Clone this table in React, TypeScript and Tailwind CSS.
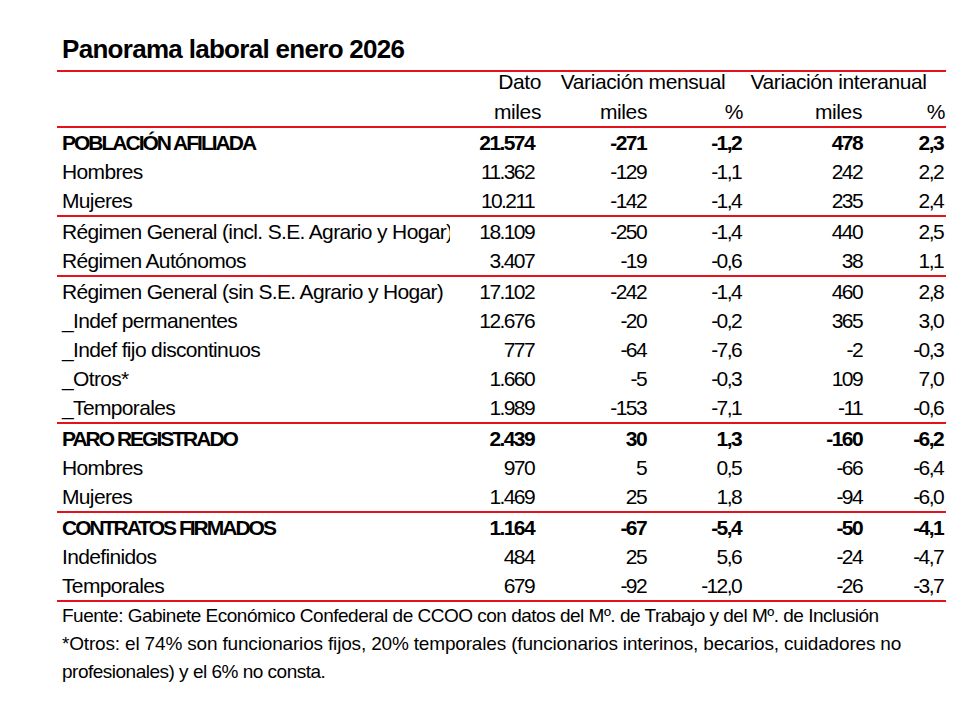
import React from 'react';

type Row = { label: string; bold?: boolean; v: string[] } | 'line';

const rows: Row[] = [
  { label: 'POBLACIÓN AFILIADA', bold: true, v: ['21.574', '-271', '-1,2', '478', '2,3'] },
  { label: 'Hombres', v: ['11.362', '-129', '-1,1', '242', '2,2'] },
  { label: 'Mujeres', v: ['10.211', '-142', '-1,4', '235', '2,4'] },
  'line',
  { label: 'Régimen General (incl. S.E. Agrario y Hogar)', v: ['18.109', '-250', '-1,4', '440', '2,5'] },
  { label: 'Régimen Autónomos', v: ['3.407', '-19', '-0,6', '38', '1,1'] },
  'line',
  { label: 'Régimen General (sin S.E. Agrario y Hogar)', v: ['17.102', '-242', '-1,4', '460', '2,8'] },
  { label: '_Indef permanentes', v: ['12.676', '-20', '-0,2', '365', '3,0'] },
  { label: '_Indef fijo discontinuos', v: ['777', '-64', '-7,6', '-2', '-0,3'] },
  { label: '_Otros*', v: ['1.660', '-5', '-0,3', '109', '7,0'] },
  { label: '_Temporales', v: ['1.989', '-153', '-7,1', '-11', '-0,6'] },
  'line',
  { label: 'PARO REGISTRADO', bold: true, v: ['2.439', '30', '1,3', '-160', '-6,2'] },
  { label: 'Hombres', v: ['970', '5', '0,5', '-66', '-6,4'] },
  { label: 'Mujeres', v: ['1.469', '25', '1,8', '-94', '-6,0'] },
  'line',
  { label: 'CONTRATOS FIRMADOS', bold: true, v: ['1.164', '-67', '-5,4', '-50', '-4,1'] },
  { label: 'Indefinidos', v: ['484', '25', '5,6', '-24', '-4,7'] },
  { label: 'Temporales', v: ['679', '-92', '-12,0', '-26', '-3,7'] },
  'line',
];

// right padding of the figures in each numeric column
const numPad = ['pr-[7px]', 'pr-[1px]', 'pr-[2px]', 'pr-0', 'pr-[3px]'];

const grid = 'grid grid-cols-[393px_91px_106px_96px_119px_84px]';

function RedLine() {
  return <div className="h-[2px] bg-[#e3121b]" />;
}

export default function App() {
  return (
    <div
      className="w-[978px] h-[722px] bg-white text-black"
      style={{ fontFamily: '"Liberation Sans", Arial, sans-serif' }}
    >
      <div className="ml-[57px] w-[889px] pt-[34px]">
        <h1 className="pl-[5px] h-[30px] leading-[30px] text-[26px] font-bold tracking-[-0.7px]">
          Panorama laboral enero 2026
        </h1>
        <div className="mt-[6px]">
          <RedLine />
        </div>

        {/* cabecera */}
        <div className={`${grid} h-[25px] text-[21px] leading-[20px] tracking-[-0.4px]`}>
          <div />
          <div className="text-right">Dato</div>
          <div className="col-span-2 text-center pl-[2px]">Variación mensual</div>
          <div className="col-span-2 text-center pr-[12px]">Variación interanual</div>
        </div>
        <div className={`${grid} h-[29px] text-[21px] leading-[29px] tracking-[-0.4px]`}>
          <div />
          <div className="text-right">miles</div>
          <div className="text-right">miles</div>
          <div className="text-right">%</div>
          <div className="text-right">miles</div>
          <div className="text-right pr-[1px]">%</div>
        </div>
        <RedLine />

        {rows.map((r, i) =>
          r === 'line' ? (
            <RedLine key={i} />
          ) : (
            <div
              key={i}
              className={`${grid} h-[29px] leading-[29px] text-[21px] ${r.bold ? 'font-bold' : ''}`}
            >
              <div
                className={`pl-[5px] whitespace-nowrap overflow-hidden ${
                  r.bold ? 'tracking-[-2px]' : 'tracking-[-0.65px]'
                }`}
              >
                {r.label}
              </div>
              {r.v.map((n, j) => (
                <div key={j} className={`text-right tracking-[-1.6px] ${numPad[j]}`}>
                  {n}
                </div>
              ))}
            </div>
          )
        )}

        {/* notas */}
        <div className="pl-[5px] text-[19px] leading-[28px] tracking-[-0.5px] whitespace-nowrap">
          <p>Fuente: Gabinete Económico Confederal de CCOO con datos del Mº. de Trabajo y del Mº. de Inclusión</p>
          <p>
            <span className="tracking-[-0.17px]">
              *Otros: el 74% son funcionarios fijos, 20% temporales (funcionarios interinos, becarios, cuidadores no
            </span>
            <br />
            profesionales) y el 6% no consta.
          </p>
        </div>
      </div>
    </div>
  );
}
